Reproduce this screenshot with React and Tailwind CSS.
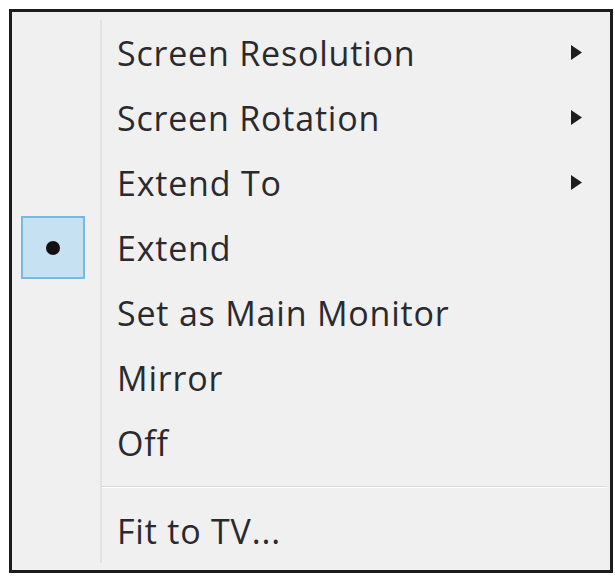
import React from "react";

const items = [
    { label: "Screen Resolution", submenu: true },
    { label: "Screen Rotation", submenu: true },
    { label: "Extend To", submenu: true },
    { label: "Extend", checked: true },
    { label: "Set as Main Monitor" },
    { label: "Mirror" },
    { label: "Off" },
];

function Arrow() {
    return (
        <svg width="13" height="17" viewBox="0 0 13 17" className="shrink-0">
            <path d="M1 1 L12 8.5 L1 16 Z" fill="#1e1e1e" />
        </svg>
    );
}

function MenuRow({ item }) {
    return (
        <div className="flex h-[65px]">
            <div className="flex w-[88px] shrink-0 items-center pl-[9px]">
                {item.checked && (
                    <div className="flex h-[63px] w-[64px] items-center justify-center border-2 border-[#79b9df] bg-[#c6e2f2]">
                        <div className="h-[14px] w-[14px] rounded-full bg-[#111]" />
                    </div>
                )}
            </div>
            <div className="flex flex-1 items-center justify-between border-l-2 border-[#e2e2e2] pl-[15px] pr-[27px]">
                <span className="text-[34px] leading-none tracking-[0.8px] text-[#2a2a2e]">{item.label}</span>
                {item.submenu && <Arrow />}
            </div>
        </div>
    );
}

export default function App() {
    return (
        <div
            className="min-h-screen bg-white pl-[9px] pt-[9px]"
            style={{ fontFamily: '"Open Sans", "Noto Sans", sans-serif' }}
        >
            <div className="flex h-[564px] w-[604px] flex-col border-[3px] border-[#1c1c1c] bg-[#f0f0f0] pb-[7px] pt-[8px]">
                {items.map((item) => (
                    <MenuRow key={item.label} item={item} />
                ))}

                <div className="flex h-[23px]">
                    <div className="w-[88px] shrink-0" />
                    <div className="flex flex-1 items-center border-l-2 border-[#e2e2e2] pr-[3px]">
                        <div className="h-[2px] w-full border-t border-[#d9d9d9] border-b border-b-white" />
                    </div>
                </div>

                <MenuRow item={{ label: "Fit to TV..." }} />
            </div>
        </div>
    );
}
